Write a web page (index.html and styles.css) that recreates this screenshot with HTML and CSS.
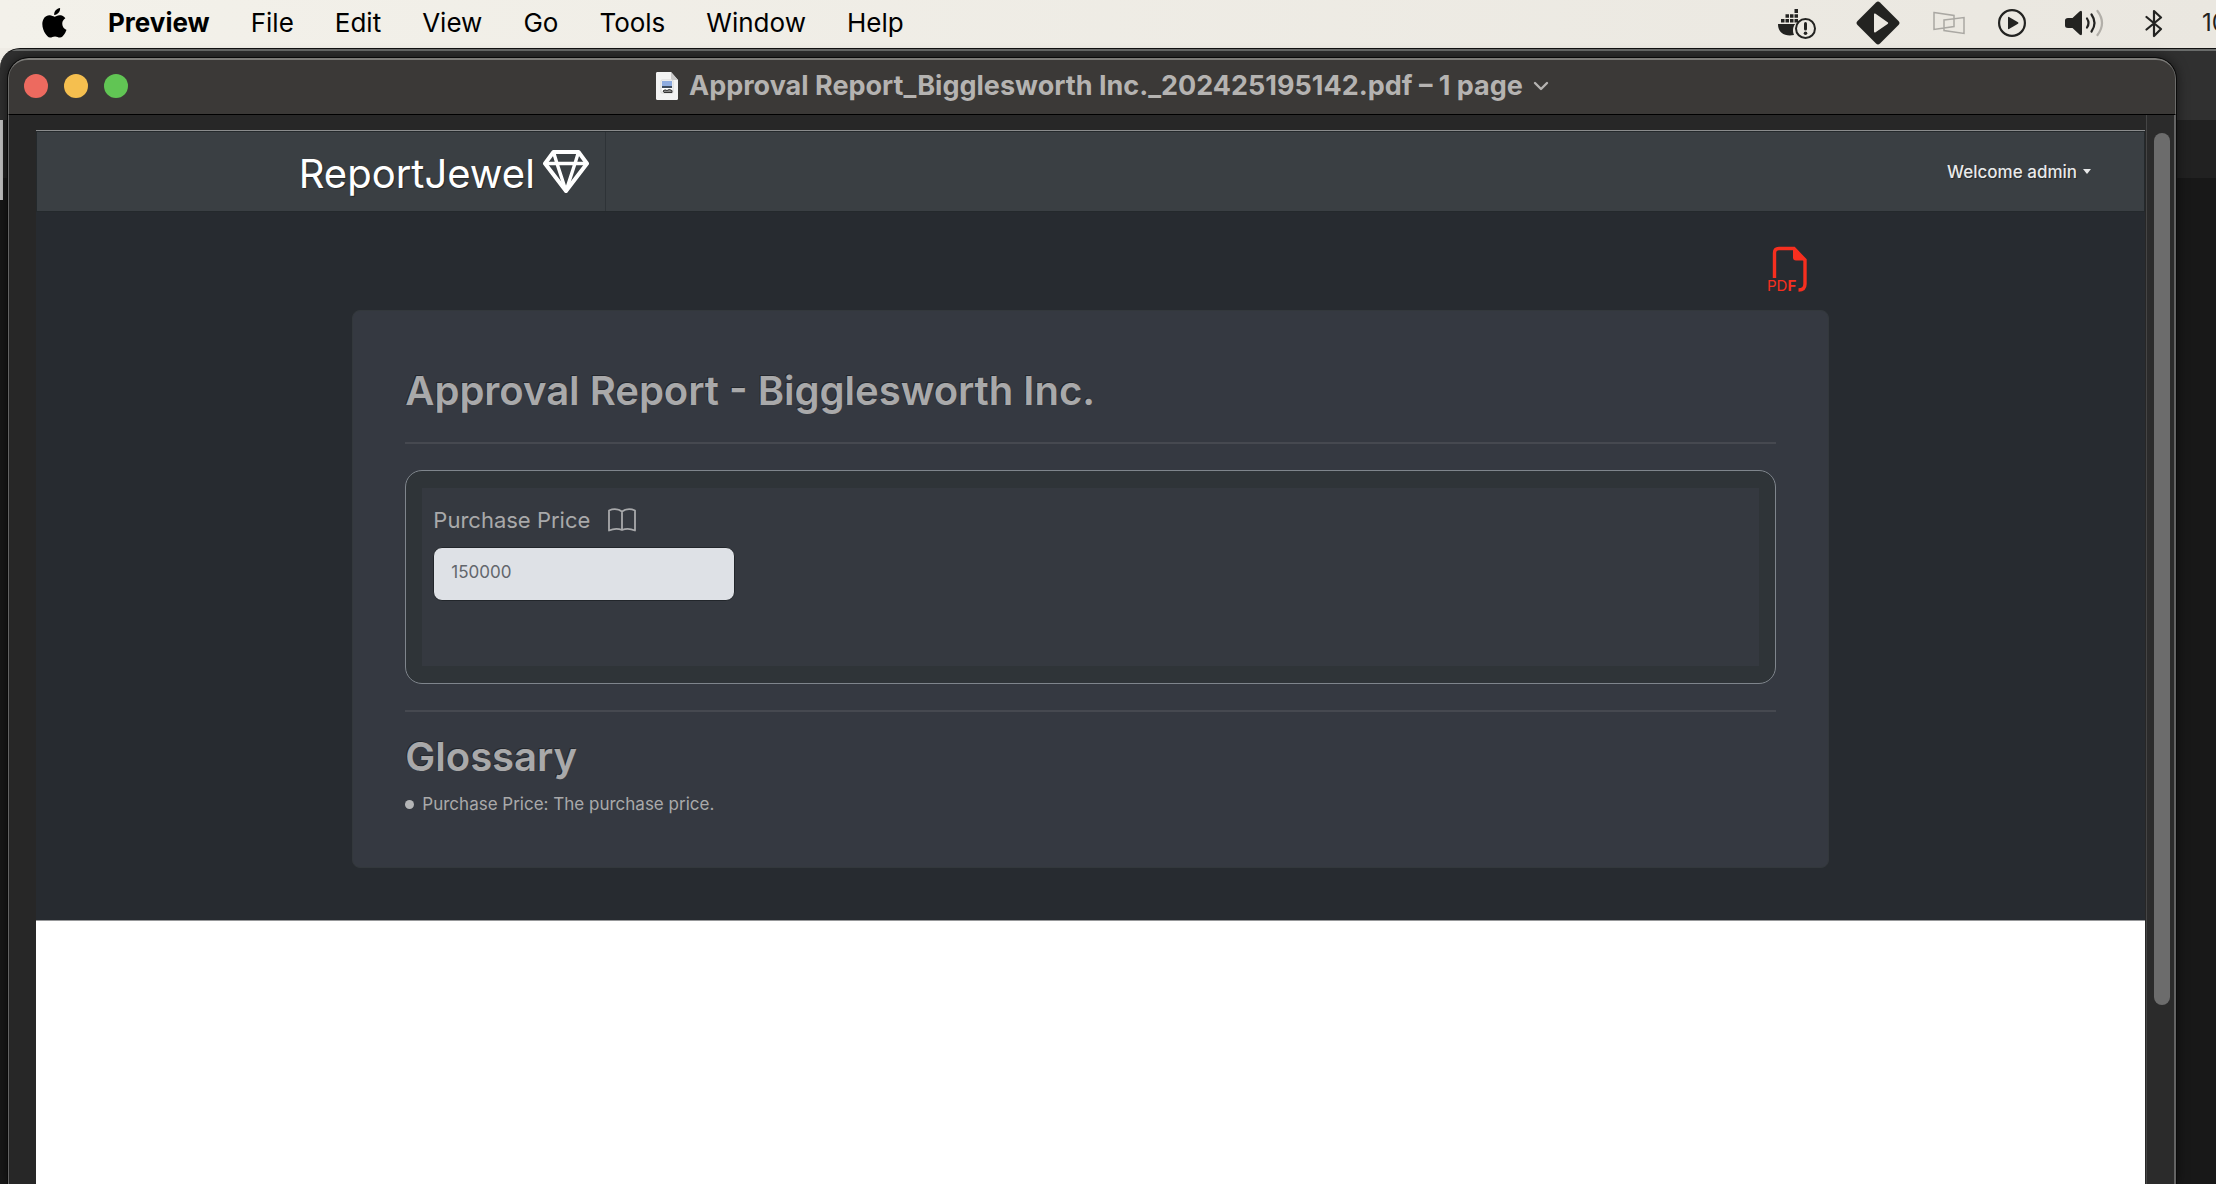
FILE: index.html
```html
<!DOCTYPE html>
<html lang="en">
<head>
<meta charset="utf-8">
<title>Approval Report - Bigglesworth Inc.</title>
<link rel="stylesheet" href="styles.css">
</head>
<body>
<header class="menubar">
  <button class="apple" aria-label="Apple menu">
    <svg width="26" height="32" viewBox="0 0 26 32"><path d="M21.600 16.800c0-3.100 2.500-4.600 2.700-4.700-1.500-2.200-3.800-2.500-4.600-2.500-2-.2-3.800 1.200-4.800 1.200s-2.500-1.200-4.100-1.100c-2.100 0-4.100 1.200-5.200 3.100-2.200 3.900-.6 9.600 1.600 12.700 1.100 1.500 2.300 3.200 4 3.200 1.600-.1 2.200-1 4.200-1 1.900 0 2.500 1 4.200 1s2.800-1.600 3.900-3.100c1.200-1.800 1.700-3.500 1.700-3.600-.1 0-3.600-1.400-3.600-5.200zM18.400 7.500c.9-1.100 1.500-2.600 1.300-4.100-1.300.1-2.800.9-3.700 2-.8.900-1.500 2.400-1.300 3.900 1.400.1 2.800-.7 3.700-1.800z" transform="translate(-4 -3) scale(1.170)"/></svg>
  </button>
  <nav class="menus" aria-label="Application menus">
    <button class="menu menu-app">Preview</button>
    <button class="menu">File</button>
    <button class="menu">Edit</button>
    <button class="menu">View</button>
    <button class="menu">Go</button>
    <button class="menu">Tools</button>
    <button class="menu">Window</button>
    <button class="menu">Help</button>
  </nav>
  <div class="status">
    <svg class="st-docker" width="38" height="32" viewBox="0 0 38 32"><path d="M0 17h17l2-2a11 11 0 0 0-4 8c0 2 .4 3.500 1 5-8 1.500-16-1-16-11z"/><path d="M3 12h3.500v3.500H3zM7.500 12H11v3.500H7.500zM12 12h3.500v3.500H12zM16.500 12H20v3.500h-3.500zM7.500 7.200H11v3.500H7.500zM12 7.200h3.500v3.500H12zM16.500 7.200H20v3.500h-3.500zM16.500 2H20v4h-3.500z"/><circle cx="27.500" cy="21.500" r="9.500" fill="none" stroke="#232321" stroke-width="2"/><path d="M27.500 16.500v5.500" fill="none" stroke="#232321" stroke-width="3" stroke-linecap="round"/><circle cx="27.500" cy="26.200" r="1.800"/></svg>
    <svg class="st-diamond" width="44" height="44" viewBox="0 0 44 44"><path d="M20 1.500q2-2 4 0L42.500 20q2 2 0 4L24 42.500q-2 2-4 0L1.500 24q-2-2 0-4z"/><path d="M18 13.500v17a1 1 0 0 0 1.600.8l12-8.300a1 1 0 0 0 0-1.800l-12-8.500a1 1 0 0 0-1.600.8z" fill="#ebe8e1"/></svg>
    <svg class="st-screens" width="32" height="24" viewBox="0 0 32 24" fill="none" stroke="#aaa8a3" stroke-width="1.500"><path d="M1 1.500l20 3v11L1 18.500zM11 9l20-2.500v16l-20-3z"/></svg>
    <svg class="st-play" width="28" height="28" viewBox="0 0 28 28"><circle cx="14" cy="14" r="12.900" fill="none" stroke="#232321" stroke-width="2.200"/><path d="M10 8.500v11q0 1 1 .5l9-5.200q1-.8 0-1.600L11 8q-1-.5-1 .5z"/></svg>
    <svg class="st-volume" width="39" height="28" viewBox="0 0 39 28"><path d="M3 9h4.500l7-6.500Q17 .8 17 3.500v21q0 2.700-2.500 1l-7-6.500H3q-3 0-3-2.500v-5Q0 9 3 9z"/><g fill="none" stroke="#232321" stroke-width="2.200" stroke-linecap="round"><path d="M22 9.500q3 4.500 0 9M26.500 5.500q6 8.500 0 17"/><path d="M32.500 2q9 12 0 24" stroke="#b2afa9"/></g></svg>
    <svg class="st-bluetooth" width="18" height="29" viewBox="0 0 18 29" fill="none" stroke="#232321" stroke-width="2.200" stroke-linejoin="round" stroke-linecap="round"><path d="M1.500 8L16 20l-7 7V2l7 6.500L1.500 20.500"/></svg>
    <span class="clock">10</span>
  </div>
</header>

<div class="desktop">
  <main class="window">
    <div class="titlebar">
      <div class="lights">
        <button class="light light-close" aria-label="Close"></button>
        <button class="light light-min" aria-label="Minimize"></button>
        <button class="light light-zoom" aria-label="Zoom"></button>
      </div>
      <button class="doc-title">
        <svg width="24" height="30" viewBox="0 0 24 30"><path d="M2 1h14l7 8v18.500q0 1.500-1.500 1.500h-19Q1 29 1 27.500V2.500Q1 1 2 1z" fill="#f3f3f3"/><path d="M16 1v6.500q0 1.500 1.500 1.500H23z" fill="#c9c9c9"/><rect x="6" y="9" width="12" height="13" rx="1" fill="#fff" stroke="#d5d5d5"/><path d="M7 10h10v5H7z" fill="#8eabdf"/><path d="M7 15h10v2H7z" fill="#3c4a5c"/><path d="M8 20q2-2 4-.5 2-2 5 0v2H9z" fill="#888" stroke="#333"/></svg>
        <span>Approval Report_Bigglesworth Inc._202425195142.pdf – 1 page</span>
        <svg class="chev" width="16" height="10" viewBox="0 0 16 10" fill="none" stroke="#b5b3b1" stroke-width="2.400" stroke-linecap="round" stroke-linejoin="round"><path d="M2 2l6 6 6-6"/></svg>
      </button>
    </div>
    <div class="viewer">
      <div class="sheet">
        <div class="report">
          <header class="navbar">
            <a class="brand" href="#">
              <span>ReportJewel</span>
              <svg width="46" height="44" viewBox="0 0 46 44" fill="none" stroke="#fff" stroke-width="4" stroke-linejoin="round"><path d="M10.500 2h25L44 13.500 23 41 2 13.500z"/><path d="M2 13.500h42M10.500 2L14 13.500l9 27.500 9-27.500L35.500 2" stroke-width="3.400"/></svg>
            </a>
            <button class="user">Welcome admin</button>
          </header>
          <div class="content">
            <a class="export" href="#" aria-label="Export PDF">
              <svg width="42" height="48" viewBox="0 0 42 48"><path d="M8.500 32V7q0-4.500 4.500-4.500h15L39 14v24q0 6-6.500 6" fill="none" stroke="#f62f1f" stroke-width="3.400" stroke-linecap="butt"/><path d="M27 2l13 12.500H30q-3 0-3-3z" fill="#f62f1f"/><text class="pdf-label" x="1" y="45">PD<tspan class="pdf-bold">F</tspan></text></svg>
            </a>
            <section class="card">
              <h1 class="heading">Approval Report - Bigglesworth Inc.</h1>
              <hr class="rule">
              <div class="group">
                <div class="group-body">
                  <div class="field-label">
                    <label for="price">Purchase Price</label>
                    <svg width="28" height="24" viewBox="0 0 28 24" fill="none" stroke="#a8a9ab" stroke-width="1.800" stroke-linejoin="round"><path d="M14 3.500Q8-.5 1 2.500v20q7-3 13-.5 6-2.500 13 .5v-20q-7-3-13 1zM14 3.500V22"/></svg>
                  </div>
                  <input class="field" id="price" type="text" value="150000">
                </div>
              </div>
              <hr class="rule">
              <h2 class="heading heading-sub">Glossary</h2>
              <ul class="glossary"><li>Purchase Price: The purchase price.</li></ul>
            </section>
          </div>
        </div>
      </div>
      <div class="scrollbar"><div class="thumb"></div></div>
    </div>
  </main>
</div>
</body>
</html>
```
FILE: styles.css
```css
* { box-sizing: border-box; }

body {
  margin: 0;
  height: 100vh;
  display: flex;
  flex-direction: column;
  overflow: hidden;
  background: #efece5;
  font-family: Inter, "Liberation Sans", sans-serif;
}

button {
  margin: 0;
  padding: 0;
  border: 0;
  background: none;
  font: inherit;
  color: inherit;
}

svg { display: block; flex: none; }

/* System menu bar */
.menubar {
  flex: none;
  height: 48px;
  padding: 0 0 2px 41px;
  display: flex;
  align-items: center;
  background: linear-gradient(90deg, #f3f1ea, #eae7e0);
  color: #000;
  overflow: hidden;
}
.menus { display: flex; gap: 41px; margin-left: 41px; }
.menu { font-size: 26px; line-height: 32px; }
.menu-app { font-weight: 700; }
.status {
  margin-left: auto;
  display: flex;
  align-items: center;
  fill: #232321;
}
.st-diamond { margin-left: 40px; }
.st-screens { margin-left: 33px; }
.st-play { margin-left: 33px; }
.st-volume { margin-left: 39px; }
.st-bluetooth { margin-left: 41px; }
.clock {
  width: 14px;
  margin-left: 39px;
  overflow: hidden;
  font-size: 24px;
  line-height: 32px;
  color: #232321;
}

/* Windows behind and the viewer window */
.desktop {
  flex: 1;
  min-height: 0;
  display: flex;
  padding: 8px 39px 0 7px;
  border-top: 1px solid #111;
  border-top-left-radius: 20px;
  background:
    linear-gradient(#c4c4c4, #c4c4c4) 0 71px / 3px 80px no-repeat,
    linear-gradient(#6a6c6b, #6a6c6b) 0 0 / 100% 2px no-repeat,
    linear-gradient(#303030 71px, #212121 71px, #212121 129px, #181818 129px);
}
.window {
  flex: 1;
  min-width: 0;
  display: flex;
  flex-direction: column;
  overflow: hidden;
  border: 1px solid #0a0a0a;
  border-bottom: 0;
  border-radius: 22px 22px 0 0;
  box-shadow: 0 0 12px #0008;
  background: #272727;
}
.titlebar {
  flex: none;
  height: 57px;
  padding: 0 15px 3px;
  display: grid;
  grid-template-columns: 1fr auto 1fr;
  align-items: center;
  border: 1px solid #6b6b69;
  border-top: 2px solid #7c7b78;
  border-bottom: 1px solid #000;
  border-radius: 20px 20px 0 0;
  background: #3b3937;
}
.lights { display: flex; gap: 16px; }
.light { width: 24px; height: 24px; border-radius: 50%; }
.light-close { background: #ed6a5f; }
.light-min { background: #f5bf4f; }
.light-zoom { background: #61c554; }
.doc-title {
  margin-left: 20px;
  display: flex;
  align-items: center;
  gap: 10px;
  font-size: 27px;
  font-weight: 700;
  line-height: 32px;
  color: #b5b3b1;
  white-space: nowrap;
}

.viewer {
  flex: 1;
  min-height: 0;
  display: flex;
  border: solid #636363;
  border-width: 0 2px 0 1px;
}
.sheet {
  flex: 1;
  min-width: 0;
  margin: 15px 0 0 27px;
  background: #fff;
}
.scrollbar {
  flex: none;
  width: 28px;
  margin-left: 1px;
  padding: 18px 4px 0 7px;
  border-left: 1px solid #454545;
  background: #2b2b2b;
}
.thumb {
  width: 16px;
  height: 83%;
  border-radius: 8px;
  background: #6c6c6c;
}

/* Report page */
.report {
  background: #272b30;
  border-top: 1px solid #8a8c8d;
  border-bottom: 1px solid #97989a;
}
.navbar {
  height: 81px;
  display: flex;
  justify-content: space-between;
  border: 1px solid #24292c;
  background: #3a3f43;
}
.brand {
  width: 27%;
  padding-right: 16px;
  display: flex;
  align-items: center;
  justify-content: flex-end;
  gap: 8px;
  border-right: 1px solid #2e3337;
  font-size: 40px;
  line-height: 48px;
  color: #fff;
  text-decoration: none;
  text-shadow: 1px 1px 1px #0006;
}
.brand span { padding-top: 4px; }
.user {
  padding-right: 53px;
  display: flex;
  align-items: center;
  gap: 6px;
  font-size: 17px;
  font-weight: 500;
  line-height: 24px;
  color: #e8e9ea;
  text-shadow: 1px 1px 1px #0006;
}
.user::after {
  content: "";
  border: 4px solid transparent;
  border-top: 5px solid #e8e9ea;
  border-bottom: 0;
}
.content {
  width: 70%;
  margin: 0 auto;
  padding: 34px 0 52px;
  display: flex;
  flex-direction: column;
}
.export { align-self: flex-end; margin: 0 21px 16px 0; }
.pdf-label { font-size: 15px; fill: #f62f1f; }
.pdf-bold { font-weight: 700; }

.card {
  padding: 55px 52px 49px;
  border: 1px solid #33383c;
  border-radius: 8px;
  background: #353941;
  color: #a9a9aa;
}
.heading {
  margin: 0;
  font-size: 40px;
  font-weight: 600;
  line-height: 50px;
  text-shadow: -1px -1px 0 #0005;
}
.rule {
  margin: 26px 0;
  border: 0;
  height: 2px;
  background: #464950;
}
.group {
  height: 214px;
  padding: 17px 16px;
  border: 1px solid #7f858c;
  border-radius: 17px;
  background: #2f3438;
}
.group-body { height: 100%; padding: 16px 11px; background: #353940; }
.field-label {
  display: flex;
  align-items: center;
  gap: 18px;
  font-size: 22px;
  line-height: 32px;
}
.field {
  display: block;
  width: 302px;
  height: 54px;
  margin-top: 11px;
  padding: 0 17px 4px;
  border: 1px solid #22262b;
  border-radius: 9px;
  background: #dee1e6;
  font: 17px/24px Inter, "Liberation Sans", sans-serif;
  color: #62666c;
}
.heading-sub { margin-top: -6px; }
.glossary {
  margin: 8px 0 0;
  padding: 0;
  list-style: none;
  font-size: 17px;
  line-height: 28px;
}
.glossary li { display: flex; align-items: center; gap: 8px; }
.glossary li::before {
  content: "";
  width: 9px;
  height: 9px;
  border-radius: 50%;
  background: #b4b5b6;
}
```
